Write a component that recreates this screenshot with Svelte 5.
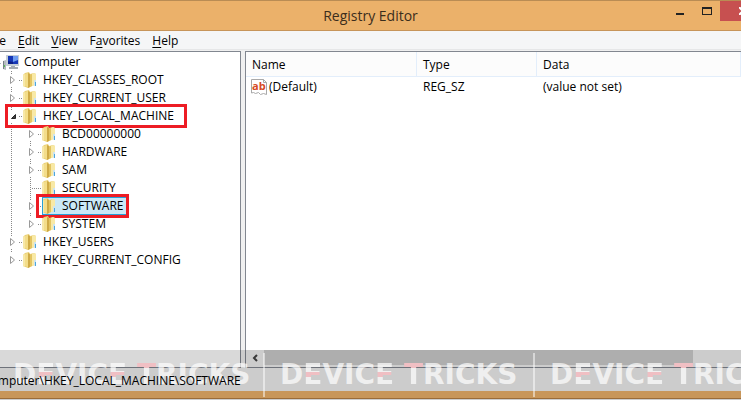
<script>
  const tree = [
    { name: 'HKEY_CLASSES_ROOT' },
    { name: 'HKEY_CURRENT_USER' },
    {
      name: 'HKEY_LOCAL_MACHINE',
      marked: true,
      children: [
        { name: 'BCD00000000' },
        { name: 'HARDWARE' },
        { name: 'SAM' },
        { name: 'SECURITY', leaf: true },
        { name: 'SOFTWARE', selected: true },
        { name: 'SYSTEM' }
      ]
    },
    { name: 'HKEY_USERS' },
    { name: 'HKEY_CURRENT_CONFIG' }
  ];
  const menus = [
    ['', 'F', 'ile'],
    ['', 'E', 'dit'],
    ['', 'V', 'iew'],
    ['F', 'a', 'vorites'],
    ['', 'H', 'elp']
  ];
</script>

{#snippet folder()}
  <svg class="folder" width="16" height="16" viewBox="0 0 16 16" aria-hidden="true">
    <path d="M0 3 2 1l4-1 1 2 4-1 2 1v10l-6 3-2 1-5-2z" fill="#e9cf74" />
    <path d="M0 3 2 2v13l-2-1z" fill="#f7e8a8" />
    <path d="M2 2 5 1v14l-3-1z" fill="#f3dd8a" />
    <path d="M5 1 7 2v13l-2 1z" fill="#cfaa45" />
    <path d="M7 3 9 2v12l-2 1z" fill="#e3c462" />
    <path d="M9 2 11 1l2 1v11l-4 1z" fill="#f8e9a6" />
    <path d="M11 8h2v5l-2 1z" fill="#cfe4ee" />
    <path d="M12 10h1v4h-1z" fill="#4da6dc" />
  </svg>
{/snippet}

{#snippet branch(nodes)}
  <ul class="branch">
    {#each nodes as node}
      <li>
        <div class="row">
          {#if node.leaf}
            <span class="leaf-gap"></span>
          {:else}
            <button class="expander" aria-label="Toggle {node.name}">
              <svg width="8" height="10" viewBox="0 0 8 10">
                {#if node.children}
                  <path d="M6.500 3.500v4h-4z" fill="#404040" stroke="#262626" />
                {:else}
                  <path d="M1.500 1.500v7l4-3.500z" fill="#fff" stroke="#999" />
                {/if}
              </svg>
            </button>
          {/if}
          <span class="dots" class:long={node.leaf}></span>
          <button class="key" class:selected={node.selected}>
            {@render folder()}
            <span>{node.name}</span>
          </button>
          {#if node.marked || node.selected}
            <span class="mark" class:small={node.selected}></span>
          {/if}
        </div>
        {#if node.children}{@render branch(node.children)}{/if}
      </li>
    {/each}
  </ul>
{/snippet}

<div class="window">
  <header class="titlebar">
    <h1>Registry Editor</h1>
    <div class="controls">
      <button aria-label="Minimize">
        <svg width="10" height="10" viewBox="0 0 10 10"><path d="M1 7h8v2H1z" fill="#222" /></svg>
      </button>
      <button aria-label="Maximize">
        <svg width="10" height="10" viewBox="0 0 10 10">
          <path fill-rule="evenodd" d="M0 1h10v8H0zM1 3v5h8V3z" fill="#222" />
        </svg>
      </button>
      <button class="close" aria-label="Close">
        <svg width="8" height="8" viewBox="0 0 8 8"><path d="m0 0 8 8M8 0 0 8" stroke="#fff" stroke-width="2" /></svg>
      </button>
    </div>
  </header>

  <nav class="menubar">
    {#each menus as [before, key, after]}
      <button>{before}<u>{key}</u>{after}</button>
    {/each}
  </nav>

  <main class="panes">
    <section class="tree" aria-label="Registry keys">
      <div class="row root">
        <svg width="19" height="16" viewBox="0 0 19 16" aria-hidden="true">
          <path d="M0 9h1v1H0zM3 7l3-1v10l-3-1z" fill="#b5bbc0" />
          <path d="M3 7h1v8H3z" fill="#777f86" />
          <path d="M4 11h1v2H4z" fill="#55c653" />
          <path d="M6 1h13v11H6z" fill="#c5ced6" />
          <path d="M8 2h10v8H8z" fill="#1536b5" />
          <path d="M13 2h5v4l-5 2z" fill="#6e9cf0" />
          <path d="M8 7l5 1v2H8z" fill="#0a1f86" />
          <path d="M11 12h4v1h3v2H9v-2h2z" fill="#a3abb2" />
        </svg>
        <button class="key">Computer</button>
      </div>
      {@render branch(tree)}
    </section>

    <section class="list" aria-label="Values">
      <table>
        <thead>
          <tr><th class="name">Name</th><th class="type">Type</th><th>Data</th></tr>
        </thead>
        <tbody>
          <tr>
            <td class="value">
              <span class="cell">
                <svg width="16" height="16" viewBox="0 0 16 16" aria-hidden="true">
                  <path d="M.5 .5h12l3 3v12l-3-1-3 1-2-2-3 1-2-1-2 .5z" fill="#fff" stroke="#a9a9a9" />
                  <path d="M12.500 .5v3h3" fill="none" stroke="#a9a9a9" />
                  <text x="1" y="11">ab</text>
                </svg>
                (Default)
              </span>
            </td>
            <td>REG_SZ</td>
            <td>(value not set)</td>
          </tr>
        </tbody>
      </table>
      <div class="scrollbar">
        <button aria-label="Scroll left">
          <svg width="6" height="8" viewBox="0 0 6 8"><path d="M5 1 2 4l3 3" fill="none" stroke="#444" stroke-width="2" /></svg>
        </button>
        <div class="thumb"></div>
      </div>
    </section>
  </main>

  <footer class="status"><span>Computer\HKEY_LOCAL_MACHINE\SOFTWARE</span></footer>

  <div class="watermark">
    {#each [0, 1, 2] as n}
      <span class="brand">D<i class="e">E</i>VIC<i class="e">E</i> <i class="t">T</i>RICKS</span>
    {/each}
  </div>
</div>

<style>
  :global(body) {
    margin: 0;
  }
  .window {
    position: relative;
    display: flex;
    flex-direction: column;
    box-sizing: border-box;
    min-height: 100vh;
    overflow: hidden;
    background: #f0f0f0;
    border-top: 1px solid #b98c54;
    font: 12px/18px 'Open Sans', 'Noto Sans', sans-serif;
    color: #000;
  }
  button {
    margin: 0;
    padding: 0;
    border: 0;
    background: none;
    font: inherit;
    color: inherit;
  }
  svg {
    display: block;
    flex: none;
  }
  .titlebar {
    position: relative;
    display: flex;
    justify-content: center;
    height: 29px;
    background: #ebb16a;
    border-bottom: 1px solid #c7955a;
  }
  h1 {
    margin: 0;
    font-size: 14px;
    line-height: 30px;
    font-weight: 400;
    color: #3b2d1c;
  }
  .controls {
    position: absolute;
    top: 0;
    right: 0;
    display: flex;
  }
  .controls button {
    display: grid;
    place-items: center;
    width: 27px;
    height: 20px;
  }
  .controls .close {
    justify-content: end;
    width: 21px;
    background: #c75050;
    overflow: hidden;
  }
  .close svg {
    margin-right: -6px;
  }
  .menubar {
    display: flex;
    gap: 12px;
    height: 18px;
    padding-left: 1px;
    margin-bottom: 1px;
    line-height: 20px;
    background: #f5f6f7;
    border-bottom: 1px solid #e6e7e8;
  }
  .menubar button:first-child {
    margin-left: -14px;
  }
  .menubar u {
    text-underline-offset: 2px;
  }
  .panes {
    flex: 1;
    display: flex;
    gap: 4px;
  }
  .tree {
    flex: none;
    box-sizing: border-box;
    width: 241px;
    padding-top: 1px;
    background: #fff;
    border: solid #828790;
    border-width: 1px 1px 1px 0;
  }
  .row {
    position: relative;
    display: flex;
    align-items: center;
    height: 18px;
  }
  .root {
    gap: 4px;
  }
  .root .key {
    padding-left: 1px;
  }
  .branch {
    margin: 0;
    padding: 0 0 0 9px;
    list-style: none;
    background: linear-gradient(#888 1px, transparent 1px) 11px 0 / 1px 2px repeat-y;
  }
  .branch .branch {
    margin-left: 10px;
  }
  .expander {
    width: 8px;
    height: 12px;
    background: #fff;
    display: grid;
    place-items: center;
  }
  li:last-child > .row > .expander {
    height: 16px;
    align-self: flex-end;
    align-items: start;
    padding-top: 2px;
  }
  .leaf-gap {
    width: 3px;
  }
  .dots {
    width: 3px;
    height: 1px;
    margin: 0 1px 0 2px;
    background: repeating-linear-gradient(90deg, #888 0 1px, transparent 1px 2px);
  }
  .dots.long {
    width: 9px;
    margin-left: 1px;
  }
  .key {
    display: flex;
    align-items: center;
    gap: 4px;
    height: 18px;
    white-space: nowrap;
  }
  .selected {
    padding-right: 4px;
    background: #cbe8f6;
    outline: 1px solid #26a0da;
    outline-offset: -1px;
  }
  .mark {
    position: absolute;
    left: -4px;
    top: -3px;
    box-sizing: border-box;
    width: 182px;
    height: 24px;
    border: 3px solid #ed1c24;
  }
  .mark.small {
    left: 8px;
    width: 93px;
  }
  .list {
    flex: 1;
    display: flex;
    flex-direction: column;
    min-width: 0;
    background: #fff;
    border: solid #828790;
    border-width: 1px 0 1px 1px;
  }
  table {
    width: 100%;
    table-layout: fixed;
    border-collapse: separate;
    border-spacing: 0;
    margin-bottom: auto;
  }
  th,
  td {
    box-sizing: border-box;
    padding: 0 0 0 6px;
    text-align: left;
    font-weight: 400;
  }
  th {
    height: 25px;
    padding-top: 2px;
    background: #fcfcfc;
    border-bottom: 1px solid #e3eefb;
    border-right: 1px solid #e3eefb;
  }
  td {
    height: 20px;
  }
  .name {
    width: 171px;
  }
  .type {
    width: 120px;
  }
  td.value {
    padding-left: 5px;
  }
  .cell {
    display: flex;
    align-items: center;
    gap: 2px;
  }
  .cell text {
    font: bold 11px 'Open Sans', sans-serif;
    fill: #d64a26;
  }
  .scrollbar {
    display: flex;
    height: 15px;
    padding-bottom: 2px;
    background: #f0f0f0;
  }
  .scrollbar button {
    display: grid;
    place-items: center;
    width: 18px;
  }
  .thumb {
    flex: 1;
    margin-right: 48px;
    background: #cdcdcd;
  }
  .status {
    display: flex;
    height: 23px;
    line-height: 26px;
    border-bottom: 7px solid #ebb16a;
    box-shadow: 0 1px #b57f45;
    margin-bottom: 2px;
  }
  .status span {
    position: relative;
    z-index: 1;
    margin-left: -17px;
  }
  .watermark {
    position: absolute;
    left: 0;
    right: 0;
    bottom: 0;
    display: flex;
    align-items: center;
    height: 50px;
    overflow: hidden;
    background: rgba(0, 0, 0, 0.15);
    pointer-events: none;
  }
  .brand {
    flex: none;
    box-sizing: border-box;
    width: 270px;
    padding-left: 15px;
    border-right: 2px solid rgba(255, 255, 255, 0.5);
    font: bold 28px/44px 'DejaVu Sans', sans-serif;
    color: rgba(255, 255, 255, 0.7);
    white-space: nowrap;
  }
  .brand:first-child {
    width: 265px;
    padding-left: 13px;
  }
  .brand i {
    font-style: normal;
    color: transparent;
    background-clip: text;
  }
  .brand .t {
    background-image: linear-gradient(#f0bfc3 10px, rgba(255, 255, 255, 0.7) 10px);
  }
  .brand .e {
    background-image: linear-gradient(
      rgba(255, 255, 255, 0.7) 14px,
      #f0bfc3 14px 19px,
      rgba(255, 255, 255, 0.7) 19px
    );
  }
</style>
